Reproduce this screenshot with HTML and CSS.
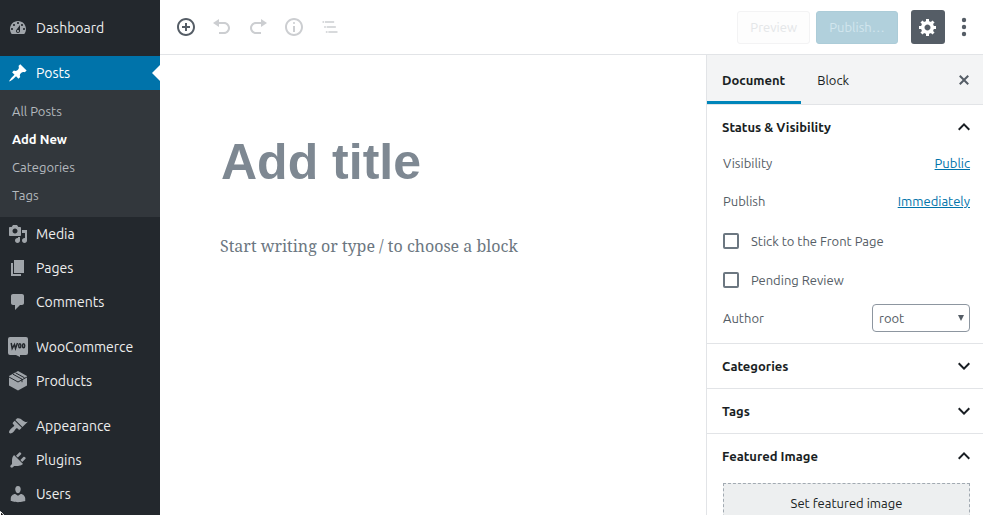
FILE: index.html
```html
<!DOCTYPE html>
<html lang="en">
<head>
<meta charset="utf-8">
<title>Add New Post</title>
<link rel="stylesheet" href="styles.css">
</head>
<body>
<div class="app">
  <nav class="menu" aria-label="Main menu">
    <a class="menu-item" href="#"><svg class="icon" viewBox="0 0 20 20"><path d="M3.76 16h12.48c1.1-1.37 1.76-3.11 1.76-5 0-4.42-3.58-8-8-8s-8 3.58-8 8c0 1.89.66 3.63 1.76 5zM10 4c.55 0 1 .45 1 1s-.45 1-1 1-1-.45-1-1 .45-1 1-1zM6 6c.55 0 1 .45 1 1s-.45 1-1 1-1-.45-1-1 .45-1 1-1zm8 0c.55 0 1 .45 1 1s-.45 1-1 1-1-.45-1-1 .45-1 1-1zm-5.37 5.55L12 7v6c0 1.1-.9 2-2 2s-2-.9-2-2c0-.57.24-1.08.63-1.45zM4 10c.55 0 1 .45 1 1s-.45 1-1 1-1-.45-1-1 .45-1 1-1zm12 0c.55 0 1 .45 1 1s-.45 1-1 1-1-.45-1-1 .45-1 1-1zm-5 3c0-.55-.45-1-1-1s-1 .45-1 1 .45 1 1 1 1-.45 1-1z" fill-rule="evenodd"/></svg>Dashboard</a>
    <div class="separator"></div>
    <a class="menu-item current" href="#"><svg class="icon" viewBox="0 0 20 20"><path d="M10.44 3.02l1.82-1.82 6.36 6.35-1.83 1.82c-1.05-.68-2.48-.57-3.41.36l-.75.75c-.92.93-1.04 2.35-.35 3.41l-1.83 1.82-2.41-2.41-2.8 2.79c-.42.42-3.38 2.71-3.8 2.29s1.86-3.39 2.28-3.81l2.79-2.79L4.1 9.36l1.83-1.82c1.05.69 2.48.57 3.4-.36l.75-.75c.93-.92 1.05-2.35.36-3.41z"/></svg>Posts</a>
    <div class="submenu">
      <a class="sub-item" href="#">All Posts</a>
      <a class="sub-item active" href="#">Add New</a>
      <a class="sub-item" href="#">Categories</a>
      <a class="sub-item" href="#">Tags</a>
    </div>
    <a class="menu-item" href="#"><svg class="icon" viewBox="0 0 20 20"><path d="M13 11V4c0-.55-.45-1-1-1h-1.67L9 1H5L3.67 3H2c-.55 0-1 .45-1 1v7c0 .55.45 1 1 1h10c.55 0 1-.45 1-1zM7 4.5c1.38 0 2.5 1.12 2.5 2.5S8.38 9.5 7 9.5 4.5 8.38 4.5 7 5.62 4.5 7 4.5zM14 6h5v10.5c0 1.38-1.12 2.5-2.5 2.5S14 17.88 14 16.5s1.12-2.5 2.5-2.5c.17 0 .34.02.5.05V9h-3V6zm-4 8.05V13h2v3.5c0 1.38-1.12 2.5-2.5 2.5S7 17.88 7 16.5 8.12 14 9.5 14c.17 0 .34.02.5.05z" fill-rule="evenodd"/></svg>Media</a>
    <a class="menu-item" href="#"><svg class="icon" viewBox="0 0 20 20"><path d="M6 15V2h10v13H6zm-1 1h8v2H3V5h2v11z"/></svg>Pages</a>
    <a class="menu-item" href="#"><svg class="icon" viewBox="0 0 20 20"><path d="M5 2h9c1.1 0 2 .9 2 2v7c0 1.1-.9 2-2 2h-2l-5 5v-5H5c-1.1 0-2-.9-2-2V4c0-1.1.9-2 2-2z"/></svg>Comments</a>
    <div class="separator"></div>
    <a class="menu-item" href="#"><svg class="icon" viewBox="0 0 20 20"><path d="M2 0h16a2 2 0 0 1 2 2v14a2 2 0 0 1-2 2h-6v2l-4-2H2a2 2 0 0 1-2-2V2a2 2 0 0 1 2-2z"/><g class="woo"><path d="M3.200 6l1 5.500L6.500 7.500l1 4L9.500 6"/><ellipse cx="11.800" cy="8.800" rx="1.100" ry="2"/><ellipse cx="15.600" cy="8.800" rx="1.100" ry="2"/></g></svg>WooCommerce</a>
    <a class="menu-item" href="#"><svg class="icon" viewBox="0 0 20 20"><path d="M10 0l9 5v9.500l-9 5-9-5V5z"/><path class="seam" d="M1 6l9 5 9-5M5 3.200l9 5v3M7.500 1.800l9 5"/></svg>Products</a>
    <div class="separator"></div>
    <a class="menu-item" href="#"><svg class="icon" viewBox="0 0 20 20"><path d="M14.48 11.06L7.41 3.99l1.5-1.5c.5-.56 2.3-.47 3.51.32 1.21.8 1.43 1.28 2.91 2.1 1.18.64 2.45 1.26 4.45.85zm-.71.71L6.7 4.7 4.93 6.47c-.39.39-.39 1.02 0 1.41l1.06 1.06c.39.39.39 1.03 0 1.42-.6.6-1.43 1.11-2.21 1.69-.35.26-.7.53-1.01.84C1.43 14.23.4 16.08 1.4 17.07c.99 1 2.84-.03 4.18-1.36.31-.31.58-.66.85-1.02.57-.78 1.08-1.61 1.69-2.21.39-.39 1.02-.39 1.41 0l1.06 1.06c.39.39 1.02.39 1.41 0z"/></svg>Appearance</a>
    <a class="menu-item" href="#"><svg class="icon" viewBox="0 0 20 20"><path d="M13.11 4.36L9.87 7.6 8 5.73l3.24-3.24c.35-.34 1.05-.2 1.56.32.52.51.66 1.21.31 1.55zm-8 1.77l.91-1.12 9.01 9.01-1.19.84c-.71.71-2.63 1.16-3.82 1.16H6.14L4.9 17.26c-.59.59-1.54.59-2.12 0-.59-.58-.59-1.53 0-2.12l1.24-1.24v-3.88c0-1.13.4-3.19 1.09-3.89zm7.26 3.97l3.24-3.24c.34-.35 1.04-.21 1.55.31.52.51.66 1.21.31 1.55l-3.24 3.25z"/></svg>Plugins</a>
    <a class="menu-item" href="#"><svg class="icon" viewBox="0 0 20 20"><path d="M10 9.25c-2.27 0-2.73-3.44-2.73-3.44C7 4.02 7.82 2 9.97 2c2.16 0 2.98 2.02 2.71 3.81 0 0-.41 3.44-2.68 3.44zm0 2.57L12.72 10c2.39 0 4.52 2.33 4.52 4.53v2.49s-3.65 1.13-7.24 1.13c-3.65 0-7.24-1.13-7.24-1.13v-2.49c0-2.25 1.94-4.48 4.47-4.48z"/></svg>Users</a>
  </nav>
  <div class="main">
    <header class="toolbar">
      <div class="tools">
        <button class="tool" type="button" aria-label="Add block"><svg class="icon" viewBox="0 0 20 20"><path d="M10 1c-5 0-9 4-9 9s4 9 9 9 9-4 9-9-4-9-9-9zm0 16c-3.900 0-7-3.100-7-7s3.100-7 7-7 7 3.100 7 7-3.100 7-7 7zm1-11H9v3H6v2h3v3h2v-3h3V9h-3V6z"/></svg></button>
        <button class="tool" type="button" disabled aria-label="Undo"><svg class="icon" viewBox="0 0 20 20"><path d="M12 5H7V2L1 6l6 4V7h5c2.200 0 4 1.800 4 4s-1.800 4-4 4H7v2h5c3.300 0 6-2.700 6-6s-2.700-6-6-6z"/></svg></button>
        <button class="tool" type="button" disabled aria-label="Redo"><svg class="icon" viewBox="0 0 20 20"><path d="M8 5h5V2l6 4-6 4V7H8c-2.200 0-4 1.800-4 4s1.800 4 4 4h5v2H8c-3.300 0-6-2.700-6-6s2.700-6 6-6z"/></svg></button>
        <button class="tool" type="button" disabled aria-label="Content structure"><svg class="icon" viewBox="0 0 20 20"><path d="M9 15h2V9H9v6zm1-10c-.5 0-1 .5-1 1s.5 1 1 1 1-.5 1-1-.5-1-1-1zm0-4c-5 0-9 4-9 9s4 9 9 9 9-4 9-9-4-9-9-9zm0 16c-3.900 0-7-3.100-7-7s3.100-7 7-7 7 3.100 7 7-3.100 7-7 7z"/></svg></button>
        <button class="tool" type="button" disabled aria-label="Block navigation"><svg class="icon" viewBox="0 0 24 24"><path d="M5 5H3v2h2V5zm3 8h11v-2H8v2zm9-8H6v2h11V5zM7 11H5v2h2v-2zm0 8h2v-2H7v2zm3-2v2h11v-2H10z"/></svg></button>
      </div>
      <div class="actions">
        <button class="btn preview" type="button" disabled>Preview</button>
        <button class="btn publish" type="button" disabled>Publish…</button>
        <button class="settings" type="button" aria-label="Settings"><svg class="icon" viewBox="0 0 20 20"><path fill-rule="evenodd" d="M18 12h-2.180c-.17.7-.44 1.350-.81 1.930l1.540 1.540-2.100 2.100-1.540-1.540c-.58.36-1.230.63-1.910.79V19H8v-2.180c-.68-.16-1.330-.43-1.910-.79l-1.540 1.540-2.120-2.120 1.540-1.540c-.36-.58-.63-1.230-.79-1.910H1V9.030h2.170c.16-.7.44-1.350.8-1.940L2.430 5.550l2.100-2.100 1.540 1.540c.58-.37 1.240-.64 1.930-.81V2h3v2.180c.68.16 1.330.43 1.910.79l1.540-1.540 2.120 2.120-1.540 1.540c.36.59.64 1.240.8 1.940H18V12zm-8.500 1.500c1.660 0 3-1.340 3-3s-1.340-3-3-3-3 1.340-3 3 1.340 3 3 3z"/></svg></button>
        <button class="more" type="button" aria-label="More"><svg class="icon" viewBox="0 0 20 20"><circle cx="10" cy="3" r="2.200"/><circle cx="10" cy="10" r="2.200"/><circle cx="10" cy="17" r="2.200"/></svg></button>
      </div>
    </header>
    <div class="body">
      <main class="editor">
        <h1 class="title">Add title</h1>
        <p class="prompt">Start writing or type / to choose a block</p>
      </main>
      <aside class="sidebar">
        <div class="tabs">
          <button class="tab selected" type="button">Document</button>
          <button class="tab" type="button">Block</button>
          <button class="close" type="button" aria-label="Close settings"><svg class="icon" viewBox="0 0 20 20"><path d="M14.950 6.460L11.410 10l3.540 3.540-1.410 1.410L10 11.420l-3.530 3.530-1.420-1.420L8.580 10 5.050 6.470l1.420-1.420L10 8.580l3.540-3.530z"/></svg></button>
        </div>
        <section class="panel">
          <button class="panel-head" type="button">Status &amp; Visibility<svg class="chevron" viewBox="0 0 24 24"><path d="M12 8l-6 6 1.410 1.410L12 10.830l4.590 4.580L18 14z"/></svg></button>
          <div class="rows">
            <div class="row"><span>Visibility</span><a class="link" href="#">Public</a></div>
            <div class="row"><span>Publish</span><a class="link" href="#">Immediately</a></div>
            <label class="row check"><input type="checkbox">Stick to the Front Page</label>
            <label class="row check"><input type="checkbox">Pending Review</label>
            <div class="row author"><label for="author">Author</label>
              <span class="select-wrap"><select id="author"><option>root</option></select><svg class="arrow" viewBox="0 0 6 6"><path d="M0 0h6L3 6z"/></svg></span></div>
          </div>
        </section>
        <section class="panel"><button class="panel-head" type="button">Categories<svg class="chevron" viewBox="0 0 24 24"><path d="M7.410 8.590L12 13.170l4.590-4.580L18 10l-6 6-6-6z"/></svg></button></section>
        <section class="panel"><button class="panel-head" type="button">Tags<svg class="chevron" viewBox="0 0 24 24"><path d="M7.410 8.590L12 13.170l4.590-4.580L18 10l-6 6-6-6z"/></svg></button></section>
        <section class="panel"><button class="panel-head" type="button">Featured Image<svg class="chevron" viewBox="0 0 24 24"><path d="M12 8l-6 6 1.410 1.410L12 10.830l4.590 4.580L18 14z"/></svg></button>
          <div class="featured"><button class="set-image" type="button">Set featured image</button></div>
        </section>
      </aside>
    </div>
  </div>
</div>
<svg class="pointer" viewBox="0 0 12 18"><path d="M.5 .5v14l3.200-3 2.300 5 2-1-2.300-4.700H10z"/></svg>
</body>
</html>
```
FILE: styles.css
```css
* { box-sizing: border-box; }
body {
  margin: 0;
  background: #fff;
  color: #191e23;
  font: 13px/18px Ubuntu, "Noto Sans", sans-serif;
  overflow: hidden;
}
button, select { font: inherit; color: inherit; }
button { border: 0; padding: 0; background: none; }
svg { display: block; fill: currentColor; }
.icon { width: 20px; height: 20px; flex: none; }
.app { display: flex; height: 100vh; }

.menu {
  flex: none;
  width: 160px;
  padding-top: 11px;
  background: #23282d;
  overflow: hidden;
}
.menu-item {
  position: relative;
  display: flex;
  align-items: center;
  gap: 8px;
  height: 34px;
  padding: 0 8px;
  color: #eee;
  font-size: 14px;
  text-decoration: none;
}
.menu-item .icon { color: #a0a5aa; }
.menu-item.current { background: #0073aa; color: #fff; }
.menu-item.current .icon { color: #fff; }
.menu-item.current::after {
  content: "";
  position: absolute;
  right: 0;
  top: 9px;
  border: 8px solid transparent;
  border-left: 0;
  border-right-color: #fff;
}
.separator { height: 11px; }
.submenu { padding: 7px 12px 8px; background: #32373c; }
.sub-item {
  display: block;
  line-height: 28px;
  color: #b4b9be;
  text-decoration: none;
}
.sub-item.active { color: #fff; font-weight: 700; }
.woo { fill: none; stroke: #23282d; stroke-width: 1.5; }
.seam { fill: none; stroke: #23282d; stroke-width: 1; }

.main { flex: 1; min-width: 0; display: flex; flex-direction: column; }
.toolbar {
  flex: none;
  display: flex;
  align-items: center;
  justify-content: space-between;
  height: 55px;
  padding: 0 9px 0 8px;
  border-bottom: 1px solid #e2e4e7;
}
.tools { display: flex; }
.tool {
  display: grid;
  place-items: center;
  width: 36px;
  height: 36px;
  color: #555d66;
}
.tool:disabled { color: #ccced1; }
.actions { display: flex; align-items: center; }
.btn {
  height: 33px;
  padding: 0 12px;
  border: 1px solid;
  border-radius: 3px;
}
.preview { margin-right: 6px; color: #e4e6e8; border-color: #f3f3f4; background: #fdfdfd; }
.publish { min-width: 82px; margin-right: 13px; color: #d2e6ee; border-color: #acccd8; background: #b1d0dc; }
.settings {
  display: grid;
  place-items: center;
  width: 34px;
  height: 34px;
  margin-right: 9px;
  border-radius: 3px;
  background: #555d66;
  color: #fff;
}
.more { width: 20px; color: #555d66; }

.body { flex: 1; min-height: 0; display: flex; }
.editor { flex: 1; padding: 77px 60px 0; color: #6c7781; }
.title {
  margin: 0 0 40px;
  padding-left: 1px;
  color: #7e8892;
  font: 700 50px/60px "Liberation Sans", Arial, sans-serif;
}
.prompt { margin: 0; font: 16px/28px "Noto Serif", "Liberation Serif", serif; }

.sidebar {
  flex: none;
  width: 277px;
  border-left: 1px solid #e2e4e7;
  color: #191e23;
  overflow: hidden;
}
.tabs {
  display: flex;
  height: 50px;
  padding-right: 9px;
  background: #f3f4f5;
  border-bottom: 1px solid #e2e4e7;
}
.tab { padding: 3px 16px 0; border-bottom: 3px solid transparent; }
.tab.selected { padding-left: 15px; border-color: #0085ba; font-weight: 700; }
.close { margin-left: auto; color: #555d66; }
.panel { border-bottom: 1px solid #e2e4e7; }
.panel-head {
  display: flex;
  align-items: center;
  justify-content: space-between;
  width: 100%;
  height: 44px;
  padding: 0 7px 0 15px;
  font-weight: 700;
}
.chevron { width: 24px; height: 24px; }
.rows { padding: 0 13px 10px 16px; color: #555d66; }
.row {
  display: flex;
  align-items: center;
  justify-content: space-between;
  height: 28px;
  margin-bottom: 10px;
}
.link { color: #0073aa; text-decoration: underline; }
.check { justify-content: flex-start; gap: 12px; height: 32px; margin-bottom: 7px; }
.check input {
  appearance: none;
  width: 16px;
  height: 16px;
  margin: 0;
  border: 2px solid #6c7781;
  border-radius: 2px;
}
.author { height: 30px; margin-bottom: 0; }
.select-wrap { position: relative; }
.select-wrap select {
  appearance: none;
  display: block;
  width: 98px;
  height: 28px;
  padding: 0 6px;
  border: 1px solid #8d96a0;
  border-radius: 4px;
  background: #fff;
}
.arrow { position: absolute; right: 6px; top: 11px; width: 6px; height: 6px; }
.featured { padding: 5px 13px 16px 16px; }
.set-image {
  width: 100%;
  height: 40px;
  border: 1px dashed #a2aab2;
  background: #edeff0;
}
.pointer {
  position: absolute;
  left: 0;
  top: 511px;
  width: 12px;
  height: 18px;
  fill: #111;
  stroke: #fff;
}
```
